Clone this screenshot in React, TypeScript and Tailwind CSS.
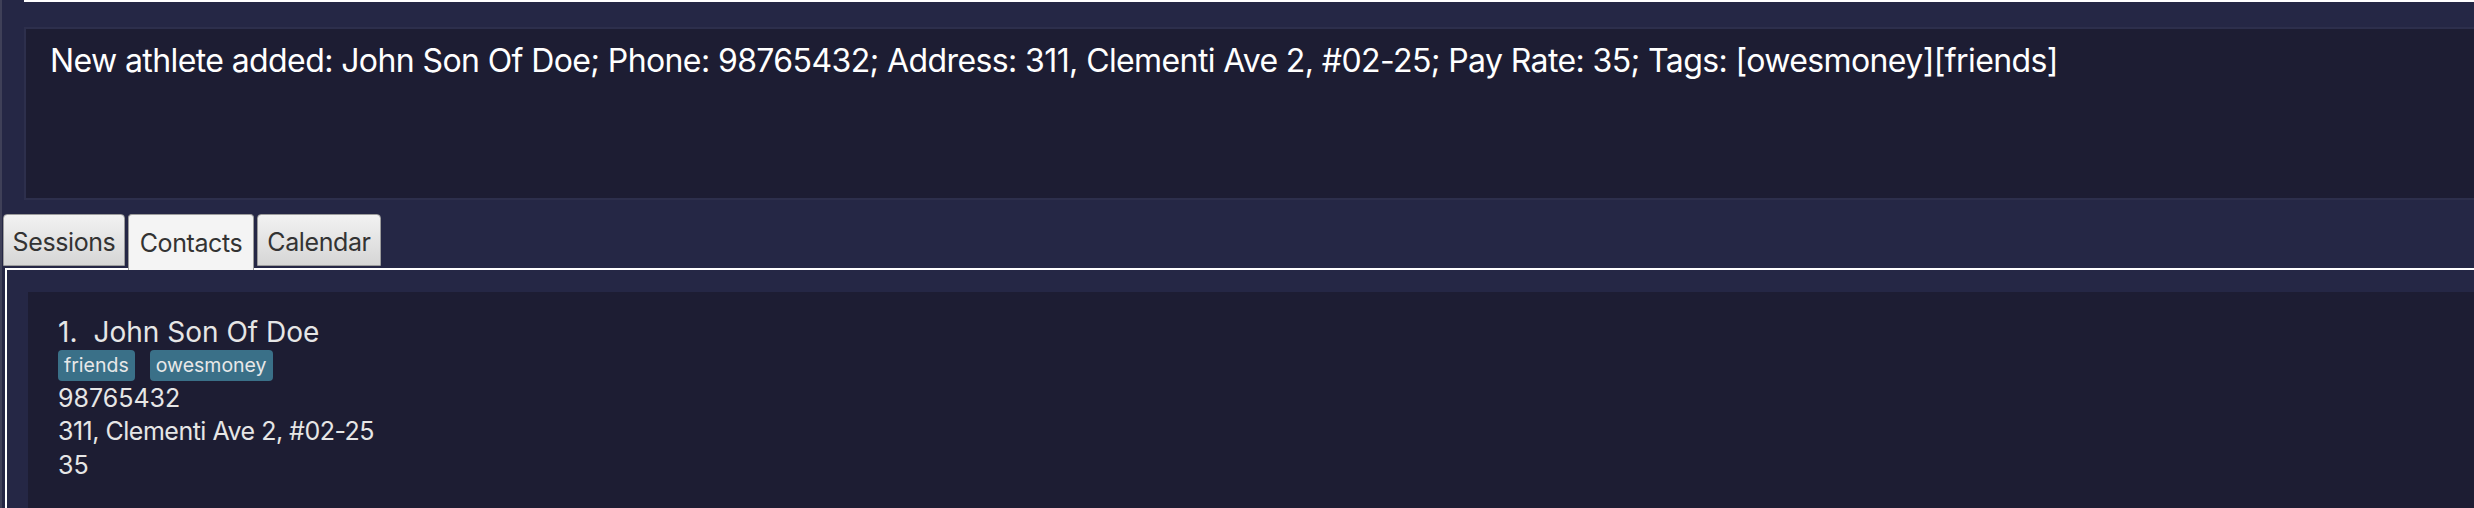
import React from 'react';

const tabs = [
  { label: 'Sessions', width: 'w-[122px]' },
  { label: 'Contacts', width: 'w-[126px]' },
  { label: 'Calendar', width: 'w-[124px]' },
];

const resultText =
  'New athlete added: John Son Of Doe; Phone: 98765432; Address: 311, Clementi Ave 2, #02-25; Pay Rate: 35; Tags: [owesmoney][friends]';

function Tab({ label, width, active }: { label: string; width: string; active: boolean }) {
  return (
    <div
      className={
        active
          ? `relative z-10 h-[56px] ${width} rounded-t-[4px] border border-b-0 border-[#9c9c9c] bg-[#f4f4f4] pt-[4px] text-center text-[25px] leading-[48px] tracking-[-0.4px] text-[#333333]`
          : `h-[52px] ${width} rounded-t-[4px] border border-[#9c9c9c] bg-gradient-to-b from-[#f2f2f2] to-[#d6d6d6] pt-[4px] text-center text-[25px] leading-[46px] tracking-[-0.4px] text-[#333333]`
      }
    >
      {label}
    </div>
  );
}

function PersonCard() {
  return (
    <div className="flex-1 bg-[#1d1d33] pl-[30px] pt-[23px] text-[#e6e6e6]">
      <div className="text-[28px] leading-[34px]">
        <span className="mr-[16px]">1.</span>John Son Of Doe
      </div>
      <div className="mt-[1px] flex gap-[15px]">
        {['friends', 'owesmoney'].map((tag) => (
          <span
            key={tag}
            className="h-[31px] rounded-[4px] bg-[#3a7088] px-[6px] text-[19.5px] leading-[31px] text-[#e8e8e8]"
          >
            {tag}
          </span>
        ))}
      </div>
      <div className="mt-[1px] flex flex-col text-[25px] leading-[33.3px]">
        <span>98765432</span>
        <span className="tracking-[-0.5px]">311, Clementi Ave 2, #02-25</span>
        <span>35</span>
      </div>
    </div>
  );
}

export default function App() {
  return (
    <div className="flex h-[508px] w-full flex-col overflow-hidden border-l-2 border-[#3f4058] bg-[#252745] font-['Inter',sans-serif]">
      <div className="ml-[22px] h-[2px] shrink-0 bg-white" />

      <div className="ml-[22px] mt-[25px] h-[173px] shrink-0 border-y-2 border-l-2 border-[#2d2f4c] bg-[#1d1d33] pl-[24px] pt-[16px]">
        <p className="whitespace-nowrap text-[32px] leading-[32px] tracking-[-0.6px] text-white">{resultText}</p>
      </div>

      <div className="mt-[14px] flex h-[54px] shrink-0 items-start gap-[3px] pl-[1px]">
        {tabs.map((t) => (
          <Tab key={t.label} label={t.label} width={t.width} active={t.label === 'Contacts'} />
        ))}
      </div>

      <div className="ml-[3px] flex flex-1 border-l-2 border-t-2 border-white pl-[21px] pt-[22px]">
        <PersonCard />
      </div>
    </div>
  );
}
